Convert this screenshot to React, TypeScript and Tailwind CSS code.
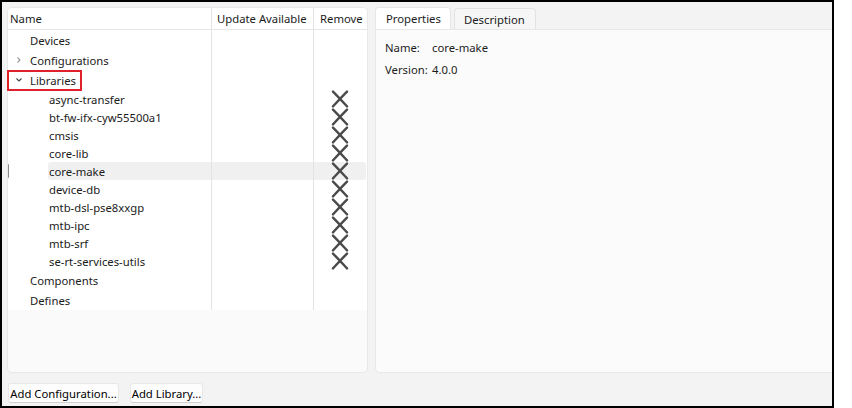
import { ReactNode } from "react";

type TreeNode = {
  label: string;
  expander?: "closed" | "open";
  children?: string[];
};

const tree: TreeNode[] = [
  { label: "Devices" },
  { label: "Configurations", expander: "closed" },
  {
    label: "Libraries",
    expander: "open",
    children: [
      "async-transfer",
      "bt-fw-ifx-cyw55500a1",
      "cmsis",
      "core-lib",
      "core-make",
      "device-db",
      "mtb-dsl-pse8xxgp",
      "mtb-ipc",
      "mtb-srf",
      "se-rt-services-utils",
    ],
  },
  { label: "Components" },
  { label: "Defines" },
];

const selected = "core-make";

function Chevron({ open }: { open: boolean }) {
  return (
    <svg width="8" height="8" viewBox="0 0 8 8" className="shrink-0">
      {open ? (
        <path d="M1.5 2.5 L4 5 L6.5 2.5" fill="none" stroke="#444" strokeWidth="1.1" />
      ) : (
        <path d="M2.5 1.5 L5 4 L2.5 6.5" fill="none" stroke="#9a9a9a" strokeWidth="1.1" />
      )}
    </svg>
  );
}

function RemoveIcon() {
  return (
    <svg width="18" height="18" viewBox="0 0 18 18">
      <path
        d="M2 1.6 C6 5.5 11 11 16 16.4 M16 1.6 C12 5.5 7 11 2 16.4"
        fill="none"
        stroke="#4a4a4a"
        strokeWidth="2.4"
        strokeLinecap="round"
      />
    </svg>
  );
}

function Row({
  indent,
  height,
  active,
  expander,
  remove,
  children,
}: {
  indent: number;
  height: string;
  active?: boolean;
  expander?: "closed" | "open";
  remove?: boolean;
  children: ReactNode;
}) {
  const cellBg = active ? "bg-[#f0f0f0]" : "";
  return (
    <div className={`relative grid grid-cols-[204px_102px_1fr] ${height}`}>
      {active && <div className="absolute left-[-1px] top-[2px] h-[14px] w-[2px] rounded bg-[#8a8a8a]" />}
      <div className="flex items-stretch border-r border-[#e3e3e3]">
        <div className="flex items-center justify-center" style={{ width: indent }}>
          {expander && <Chevron open={expander === "open"} />}
        </div>
        <div className={`flex flex-1 items-center rounded-l-[3px] pl-[1px] pt-[2px] ${cellBg}`}>{children}</div>
      </div>
      <div className={`border-r border-[#e3e3e3] ${cellBg}`} />
      <div className={`flex items-center justify-center rounded-r-[3px] mr-[1px] ${cellBg}`}>
        {remove && <RemoveIcon />}
      </div>
    </div>
  );
}

function ProjectTree() {
  return (
    <div className="flex h-[366px] w-[361px] flex-col overflow-hidden rounded-[5px] border border-[#e8e8e8] bg-[#fafafa]">
      <div className="bg-white">
        <div className="grid h-[22px] grid-cols-[204px_102px_1fr] border-b border-[#e6e6e6]">
          <div className="flex items-center border-r border-[#e3e3e3] pl-[2px] pt-[1px]">Name</div>
          <div className="flex items-center border-r border-[#e3e3e3] pl-[5px] pt-[1px]">Update Available</div>
          <div className="flex items-center pl-[6px] pt-[1px]">Remove</div>
        </div>
        {tree.map((node) => (
          <div key={node.label}>
            <Row indent={21} height="h-[20px]" expander={node.expander}>
              {node.label}
            </Row>
            {node.children?.map((lib) => (
              <Row key={lib} indent={40} height="h-[18px]" active={lib === selected} remove>
                {lib}
              </Row>
            ))}
          </div>
        ))}
      </div>
    </div>
  );
}

function DetailsPanel() {
  return (
    <div className="flex h-[366px] flex-1 flex-col">
      <div className="flex h-[22px] items-end gap-[3px]">
        <div className="flex h-[22px] w-[76px] items-center rounded-t-[4px] border border-b-0 border-[#e6e6e6] bg-white pl-[10px] pt-[1px]">
          Properties
        </div>
        <div className="flex h-[21px] w-[82px] items-center rounded-t-[4px] border border-b-0 border-[#e2e2e2] bg-[#f6f6f6] pl-[9px] pt-[1px]">
          Description
        </div>
      </div>
      <div className="flex-1 rounded-bl-[5px] border border-r-0 border-[#e8e8e8] bg-[#fbfbfb] px-[9px] pt-[7px]">
        <div className="flex h-[22px] items-center">
          <span className="w-[47px]">Name:</span>
          <span>core-make</span>
        </div>
        <div className="flex h-[22px] items-center">
          <span className="w-[47px]">Version:</span>
          <span>4.0.0</span>
        </div>
      </div>
    </div>
  );
}

export default function App() {
  return (
    <div className="h-[408px] w-[852px] bg-white font-['Noto_Sans',sans-serif] text-[11.3px] leading-none text-[#1b1b1b]">
      <div className="flex h-[408px] w-[834px] flex-col border-2 border-black bg-[#f3f3f3]">
        <div className="flex gap-[7px] pl-[5px] pt-[5px]">
          <ProjectTree />
          <DetailsPanel />
        </div>
        <div className="flex gap-[11px] pl-[6px] pt-[10px]">
          <button className="h-[20px] w-[111px] rounded-[3px] border border-[#e8e8e8] border-b-[#d0d0d0] bg-[#fdfdfd] pt-[1px] text-[11.3px] text-black">
            Add Configuration...
          </button>
          <button className="h-[20px] w-[73px] rounded-[3px] border border-[#e8e8e8] border-b-[#d0d0d0] bg-[#fdfdfd] pt-[1px] text-[11.3px] text-black">
            Add Library...
          </button>
        </div>
      </div>
      <div className="pointer-events-none absolute left-[7px] top-[70px] h-[21px] w-[75px] border-2 border-[#e0202a]" />
    </div>
  );
}
